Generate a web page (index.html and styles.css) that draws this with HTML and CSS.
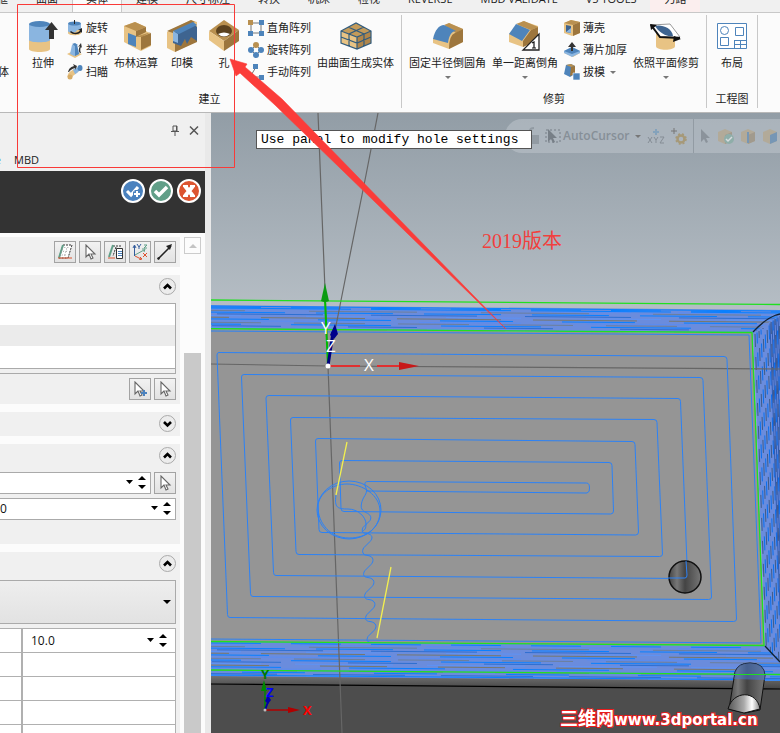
FILE: index.html
```html
<!DOCTYPE html>
<html lang="zh-CN">
<head>
<meta charset="utf-8">
<title>CAD</title>
<link rel="stylesheet" href="styles.css">
</head>
<body>
<svg class="defs" aria-hidden="true">
  <symbol id="arrow" viewBox="0 0 16 16"><path d="M4 1v12l3-3 2 5 2-1-2-4h4z" fill="#fff" stroke="#666" stroke-width="1.1"/></symbol>
  <symbol id="up" viewBox="0 0 17 17"><circle cx="8.500" cy="8.500" r="8" fill="#ececec" stroke="#aaa"/><path d="M5 10.500 8.500 7 12 10.500" fill="none" stroke="#000" stroke-width="2.600"/></symbol>
  <symbol id="down" viewBox="0 0 17 17"><circle cx="8.500" cy="8.500" r="8" fill="#ececec" stroke="#aaa"/><path d="M5 7 8.500 10.500 12 7" fill="none" stroke="#000" stroke-width="2.600"/></symbol>
  <symbol id="spin" viewBox="0 0 22 16"><path d="M0 5h7L3.500 9zM12 5l4-4 4 4zM12 10h8l-4 4z"/></symbol>
</svg>

<nav class="tabs">
  <button class="tab tab-cut">线框</button><button class="tab">曲面</button><button class="tab active">实体</button><button class="tab">建模</button><button class="tab">尺寸标注</button><button class="tab">转换</button><button class="tab">机床</button><button class="tab">检视</button><button class="tab">REVERSE</button><button class="tab">MBD VALIDATE</button><button class="tab">V5 TOOLS</button><button class="tab tool">刀路</button>
</nav>

<header class="ribbon">
  <section class="group group-cut"><div class="stack"><span></span><span></span><button class="small">实体</button></div></section>

  <section class="group">
    <div class="items">
      <button class="big"><svg viewBox="0 0 32 32"><path d="M2 20v9c0 4 21 4 21 0v-9z" fill="#e8c384"/><path d="M2 4v16c0 3 21 3 21 0V4z" fill="#8ab5e0"/><ellipse cx="12.500" cy="4" rx="10.500" ry="3" fill="#4e84bb"/><path d="M22 19v-9h-4l6.500-8L31 10h-4v9z" fill="#333"/></svg>拉伸</button>
      <div class="stack">
        <button class="small"><svg viewBox="0 0 16 16"><path d="M1 4v9c0 3 13 3 13 0V4z" fill="#e8c384"/><path d="M1 4v7c0 2 8 3 9-1h4V4z" fill="#8ab5e0"/><ellipse cx="7.500" cy="3.500" rx="6.500" ry="2" fill="#4e84bb"/><path d="M7.500 0v4" stroke="#222"/><path d="M4 11c3 3 8 2 9-1l-2 0 4-2v5l-1-1c-3 3-8 3-11 0z" fill="#222"/></svg>旋转</button>
        <button class="small"><svg viewBox="0 0 16 16"><path d="M0 12 6 9l9 3-7 4z" fill="#e8c384"/><path d="M3 12 5 3h5l2 9-5 2z" fill="#8ab5e0"/><path d="m8 3 2 0 2 9-4 2zM5 2l3-1 3 2-3 1z" fill="#4e84bb"/><path d="M13 11c-2-2-1-5 0-7l-2 1 3-4 1 5-1-1c-1 2-1 4 0 6z" fill="#333"/></svg>举升</button>
        <button class="small"><svg viewBox="0 0 16 16"><path d="M3 13C3 8 8 10 11 4" fill="none" stroke="#e8c384" stroke-width="5"/><path d="M7 8c2-1 3-2 4-4" fill="none" stroke="#8ab5e0" stroke-width="5"/><circle cx="3" cy="13" r="2.500" fill="#d8ad68"/><ellipse cx="13" cy="4" rx="2.500" ry="3" fill="#4e84bb"/><path d="M1 8C2 4 4 3 7 2L6 0l4 2-2 4V4C5 5 3 6 2 8z" fill="#333"/></svg>扫瞄</button>
      </div>
      <button class="big"><svg viewBox="0 0 32 32"><path d="m4 6 11-4 11 5v4l5 3v12l-10 5-8-4-9-5z" fill="#e8c384"/><path d="m4 6 11-4 11 5-10 4zM16 17l5-2 10-3-9 5z" fill="#b99050"/><path d="m16 11 10-4v5l-10 5zM21 17l10-4v12l-10 5z" fill="#9d763d"/><path d="m8 13 8 3v11l-8-3z" fill="#4e84bb"/></svg>布林运算</button>
      <button class="big"><svg viewBox="0 0 32 32"><path d="M1 12 25 0l6 2v19L9 32l-8-4z" fill="#e8c384"/><path d="M1 11 25 0l4 2L7 13zM9 23l22-9v8L9 32z" fill="#9d763d"/><path d="m7 13 20-10 4 4v14l-6-4-4 7-2-5-4 7-8-3z" fill="#3e6490"/><path d="m7 11 20-9 4 3-18 9z" fill="#4e84bb"/><path d="m7 11 5 3v9l-5-2z" fill="#8ab5e0"/></svg>印模</button>
      <button class="big"><svg viewBox="0 0 32 32"><path d="M1 11 16 0l15 10-15 11z" fill="#b99050"/><path d="m1 11 15 10v10L1 20z" fill="#e8c384"/><path d="m31 10-15 11v10l15-10z" fill="#9d763d"/><ellipse cx="16" cy="11" rx="8" ry="6" fill="#5c421f"/><path d="M10 14q6-3 12 0-6 5-12 0" fill="#fff"/></svg>孔</button>
      <div class="stack">
        <button class="small"><svg viewBox="0 0 16 16"><path d="M3 3h10v10H3z" fill="none" stroke="#777"/><path d="M0 0h5v5H0z" fill="#b99050"/><path d="M11 0h5v5h-5zM0 11h5v5H0zM11 11h5v5h-5z" fill="#4e84bb"/></svg>直角阵列</button>
        <button class="small"><svg viewBox="0 0 16 16"><path d="m8 3 5 5-5 5-5-5z" fill="none" stroke="#777"/><circle cx="8" cy="3" r="3" fill="#b99050"/><g fill="#4e84bb"><circle cx="3" cy="8" r="3"/><circle cx="13" cy="8" r="3"/><circle cx="8" cy="13" r="3"/></g></svg>旋转阵列</button>
        <button class="small"><svg viewBox="0 0 16 16"><path d="M8 3 2 13h11" fill="none" stroke="#777"/><path d="M5 0h5v5H5zM11 11h5v5h-5zM0 10h4v4H0z" fill="#4e84bb"/></svg>手动阵列</button>
      </div>
      <button class="big"><svg viewBox="0 0 32 32"><path d="M1 11 16 3l15 8-14 6z" fill="#c49b5a"/><path d="m1 11 16 6v12L1 23z" fill="#e8c384"/><path d="m31 11-14 6v12l14-6z" fill="#b1864a"/><path d="M1 11 16 3l15 8v12l-14 6-16-6zM1 11l16 6 14-6M17 17v12M8 7l16 7v12M24 7 9 14v12M1 17l16 6 14-6" fill="none" stroke="#335c7c" stroke-width="1.200"/></svg>由曲面生成实体</button>
    </div>
    <h2>建立</h2>
  </section>

  <section class="group">
    <div class="items">
      <button class="big menu"><svg viewBox="0 0 32 32"><path d="M1 19 17 3l14 6v13l-14 7-16-6z" fill="#e8c384"/><path d="m12 5 5-2 14 6-7 4z" fill="#b99050"/><path d="M1 19C3 10 7 5 12 5l12 6c-4 0-7 4-8 12z" fill="#4e84bb"/><path d="m31 9-8 4q-6 2-6 16l14-7z" fill="#9d763d"/></svg>固定半径倒圆角</button>
      <button class="big menu"><svg viewBox="0 0 32 32"><path d="m0 14 14-13 15 5v14l-15 7-14-5z" fill="#e8c384"/><path d="m7 4 8-3 14 6-7 3z" fill="#b99050"/><path d="m0 14 7-10 14 6-8 11z" fill="#4e84bb"/><path d="m29 7-7 3-8 11v6l15-7z" fill="#9d763d"/><path d="M14 30h16V14z" fill="#fff" stroke="#222" stroke-width="1.300"/><path d="m23 23 2-1v6m-2 0h4" fill="none" stroke="#111" stroke-width="1.200"/></svg>单一距离倒角</button>
      <div class="stack">
        <button class="small"><svg viewBox="0 0 16 16"><path d="m0 3 7-3 9 2v11l-8 3-8-3z" fill="#e8c384"/><path d="m0 3 7-3 9 2-7 3z" fill="#b99050"/><path d="m9 5 7-3v11l-7 3z" fill="#9d763d"/><path d="m2 5 5 1v7l-5-1z" fill="#3e6490"/><path d="m2 12 5-4v5z" fill="#8ab5e0"/></svg>薄壳</button>
        <button class="small"><svg viewBox="0 0 16 16"><path d="m0 11 8-3 8 3-7 4z" fill="#e8c384"/><path d="m0 9 8-4 8 4v2l-8 4-8-4z" fill="#8ab5e0"/><path d="m0 9 8-4 8 4-8 3z" fill="#4e84bb"/><path d="M7 9V5H4l4-5 4 5H9v4z" fill="#333"/></svg>薄片加厚</button>
        <button class="small"><svg viewBox="0 0 16 16"><path d="m2 1 5-1 4 2v8l-5 3-6-3z" fill="#4e84bb"/><path d="m2 1 5-1 4 2-4 1z" fill="#b99050"/><path d="m7 3 4-1v8l-5 2z" fill="#9d763d"/><path d="M9 9h7v7H9z" fill="#4e84bb" stroke="#fff" stroke-width=".6"/></svg>拔模<i class="caret"></i></button>
      </div>
      <button class="big menu"><svg viewBox="0 0 32 32"><path d="M6 13v13c0 5 19 5 19 0V14z" fill="#e8c384"/><path d="m1 5 19-1 10 13-20 0z" fill="#fff" stroke="#999"/><path d="M5 6c5-2 17 1 18 10-8 1-14-4-18-10" fill="#3e6490"/><path d="m1 5 9 12 20 1" fill="none" stroke="#111" stroke-width="2"/><path d="m0 4 7 1-6 5zM31 19l-7-3-1 6z" fill="#111"/></svg>依照平面修剪</button>
    </div>
    <h2>修剪</h2>
  </section>

  <section class="group">
    <div class="items">
      <button class="big"><svg viewBox="0 0 32 32"><path d="M1.500 3.500h29v25h-29zM19.500 7.500h8v8h-8zM4.500 17.500h8v8h-8zM18.500 20.500h12M18.500 20v8M24.500 20v8M18.500 24.500h12" fill="#fff" stroke="#4e84bb"/><circle cx="8.500" cy="10.500" r="4" fill="none" stroke="#4e84bb"/></svg>布局</button>
    </div>
    <h2>工程图</h2>
  </section>
</header>

<main class="work">
  <aside class="panel">
    <div class="panel-head">
      <button class="plain" aria-label="pin"><svg width="10" height="11" viewBox="0 0 10 11"><path d="M3 1h4v5H3zM1 6.500h8M5 7v4M6.500 1v5" fill="none" stroke="#555"/></svg></button>
      <button class="plain" aria-label="close"><svg width="10" height="11" viewBox="0 0 10 11"><path d="m1 1.500 8 8m0-8-8 8" stroke="#555" stroke-width="1.500"/></svg></button>
    </div>
    <div class="panel-tabs"><a href="#" class="link">e</a><a href="#">MBD</a></div>
    <div class="confirm">
      <button class="plain" aria-label="ok and new"><svg width="24" height="24" viewBox="0 0 24 24"><circle cx="12" cy="12" r="11" fill="#4b82be" stroke="#fff" stroke-width="2"/><path d="m6 12 4 4 7-8" fill="none" stroke="#fff" stroke-width="3"/><path d="M16 11v8m-4-4h8" stroke="#4b82be" stroke-width="5"/><path d="M16 12v6m-3-3h6" stroke="#fff" stroke-width="2"/></svg></button>
      <button class="plain" aria-label="ok"><svg width="24" height="24" viewBox="0 0 24 24"><circle cx="12" cy="12" r="11" fill="#619f88" stroke="#fff" stroke-width="2"/><path d="m6 12 4 4 8-8" fill="none" stroke="#fff" stroke-width="3.500"/></svg></button>
      <button class="plain" aria-label="cancel"><svg width="24" height="24" viewBox="0 0 24 24"><circle cx="12" cy="12" r="11" fill="#dc5430" stroke="#fff" stroke-width="2"/><path d="m8 7 8 10m0-10L8 17" stroke="#fff" stroke-width="4"/><path d="M6 7h5m2 0h5M6 17h5m2 0h5" stroke="#fff" stroke-width="2"/></svg></button>
    </div>
    <div class="panel-body">
      <div class="sections">
        <div class="box tools">
          <button class="tool-btn" aria-label="plane"><svg viewBox="0 0 16 16"><path d="M6 1h9l-4 13H2z" fill="#fff" stroke="#333" stroke-dasharray="2 1"/><path d="m6 1-4 13" stroke="#619f88" stroke-width="2"/><path d="M1 14h14" stroke="#dc5430"/><path d="M8 3 5 12m6-9-3 9M5 5h8M4 8h8M3 11h8" stroke="#999" stroke-dasharray="1 3"/></svg></button>
          <button class="tool-btn" aria-label="select"><svg viewBox="0 0 16 16"><use href="#arrow"/></svg></button>
          <button class="tool-btn" aria-label="plane list"><svg viewBox="0 0 16 16"><path d="M6 2h9M9 3 6 12" stroke="#333" stroke-dasharray="2 1"/><path d="M6 1 2 13" stroke="#619f88" stroke-width="2"/><path d="M1 14h7" stroke="#dc5430"/><path d="M9.500 4.500h6v10h-6z" fill="#fff" stroke="#333"/><path d="M11 7.500h4m-4 2h4m-4 2h4" stroke="#4b82be"/></svg></button>
          <button class="tool-btn" aria-label="axes"><svg viewBox="0 0 16 16"><path d="M2.500 12V2M1 4l1.500-3L4 4M5 0l2 3 2-3M7 3v2" fill="none" stroke="#335c9c"/><path d="m3 11 9-5M10 5l3 0-1 3M12 1h3l-3 3h3" fill="none" stroke="#619f88"/><path d="m3 12 6 3M8 13l2 2-3 1M11 9l4 4m0-4-4 4" fill="none" stroke="#dc5430"/></svg></button>
          <button class="tool-btn" aria-label="vector"><svg viewBox="0 0 16 16"><path d="M1 15 14 2" stroke="#222" stroke-width="1.500"/><path d="m15 0-2 6-4-4zM0 14l2-1 1 2-2 1z" fill="#222"/></svg></button>
        </div>
        <div class="box">
          <button class="expander" aria-label="collapse"><svg width="17" height="17"><use href="#up"/></svg></button>
          <ul class="list"><li></li><li></li><li></li></ul>
          <div class="tools-row"><button class="tool-btn" aria-label="add"><svg viewBox="0 0 16 16"><use href="#arrow" x="-1"/><path d="M12 9v6m-3-3h6" stroke="#4b82be" stroke-width="2"/></svg></button><button class="tool-btn" aria-label="select"><svg viewBox="0 0 16 16"><use href="#arrow"/></svg></button></div>
        </div>
        <div class="box"><button class="expander" aria-label="expand"><svg width="17" height="17"><use href="#down"/></svg></button></div>
        <div class="box roomy">
          <button class="expander" aria-label="collapse"><svg width="17" height="17"><use href="#up"/></svg></button>
          <div class="tools-row"><label class="field"><input aria-label="diameter" value=""><svg width="22" height="16"><use href="#spin"/></svg></label><button class="tool-btn" aria-label="select"><svg viewBox="0 0 16 16"><use href="#arrow"/></svg></button></div>
          <label class="field"><input aria-label="angle" value="0"><svg width="22" height="16"><use href="#spin"/></svg></label>
        </div>
        <div class="box last">
          <button class="expander" aria-label="collapse"><svg width="17" height="17"><use href="#up"/></svg></button>
          <button class="drop" aria-label="hole style"><i class="caret black"></i></button>
          <table class="grid">
            <tr><td></td><td><label class="cell"><input aria-label="value" value="10.0"><svg width="22" height="16"><use href="#spin"/></svg></label></td></tr>
            <tr><td></td><td></td></tr><tr><td></td><td></td></tr><tr><td></td><td></td></tr><tr><td></td><td></td></tr>
          </table>
        </div>
      </div>
      <div class="scroll"><button class="scroll-up" aria-label="scroll up"></button><div class="thumb"></div></div>
    </div>
  </aside>

  <section class="view">
    <svg class="scene" viewBox="211 113 569 620" preserveAspectRatio="xMinYMin slice">
      <defs>
        <linearGradient id="sky" x2="0" y2="1"><stop offset="0" stop-color="#929da6"/><stop offset="1" stop-color="#b6bec5"/></linearGradient>
        <linearGradient id="edge" x2="0" y2="1"><stop offset="0" stop-color="#777"/><stop offset="1" stop-color="#444"/></linearGradient>
        <linearGradient id="metal"><stop offset="0" stop-color="#444"/><stop offset=".25" stop-color="#777"/><stop offset=".5" stop-color="#444"/><stop offset="1" stop-color="#777"/></linearGradient>
        <linearGradient id="tip"><stop offset="0" stop-color="#555"/><stop offset=".5" stop-color="#aaa"/><stop offset=".75" stop-color="#fff"/><stop offset="1" stop-color="#888"/></linearGradient>
        <clipPath id="topBand"><path d="M211 305 780 310V315L753 333 211 329z"/></clipPath>
        <clipPath id="bottomBand"><path d="M211 641 765 646 780 662V681L211 676z"/></clipPath>
        <clipPath id="rightBand"><path d="M753 333 765 323 776 315 780 314V662L765 646z"/></clipPath>
      </defs>
      <path fill="url(#sky)" d="M211 113h569v200H211z"/>
      <path fill="#4d4d4d" d="M211 680h569v53H211z"/>
      <path fill="url(#edge)" d="M211 674 780 679V689L211 684z"/>
      <path d="M211 684 780 689" stroke="#000" stroke-width="1.200"/>
      <path fill="#959595" d="M211 329 753 333 765 646 211 642z"/>
      <path fill="#6a8cdd" d="M211 305 780 310V315L753 333 211 329zM753 333 776 315 780 314V662L765 646zM211 641 765 646 780 662V681L211 676z"/>
      <g id="topLines" clip-path="url(#topBand)"></g>
      <g id="bottomLines" clip-path="url(#bottomBand)"></g>
      <g id="rightLines" clip-path="url(#rightBand)"></g>
      <g fill="none" stroke="#666" stroke-width="1.200"><path d="M318 113 328 366 342 733M378 113 366 175 349 260 328 366M211 364 328 366 780 369"/></g>
      <g fill="none" stroke="#2c82f6" stroke-width="1">
        <path d="M211 331 749 335 761 643 211 639"/>
        <path d="M219 352.500 724 356.500q3 0 3 3L736.500 619q0 2.500-3 2.500L230 617.500q-2.500 0-2.500-3L217 355q0-2.500 2-2.500z"/>
        <path d="M244 374.500 700 377.500q3 0 3 3L711.500 597q0 2.500-3 2.500L253 596.500q-2.500 0-2.500-3L241.500 377q0-2.500 2.500-2.500z"/>
        <path d="M269 395.500 678 398.500q2.500 0 2.500 3L687.500 576q0 2.500-3 2.500L276 575.500q-2.500 0-2.500-3L266 398q0-2.500 3-2.500z"/>
        <path d="M293 417.500 654 419.500q3 0 3 3L662.500 554q0 2.500-3 2.500L299 554.500q-3 0-3-3L290.500 420q0-2.500 2.500-2.500z"/>
        <path d="M318 438.500 632 441.500q3 0 3 3L638.500 532q0 3-3 3L322 532.500q-3 0-3-3L315.500 441q0-2.500 2.500-2.500z"/>
        <path d="M342 460.500 609 462.500q3 0 3 3L613.500 511q0 3-3 3L344 511.500q-3 0-3-3L339.500 463q0-2.500 2.500-2.500z"/>
        <path d="M366 491 587 493q3-1 2.500-5 0-5-3-5L368 481.500q-4 0-3 4c4 8-1 9-3 16s0 9 4 11 6 4 4 8l-7 7c-2 4 0 6 4 6 6 1 6 5 3 8l-6 6c-3 4-1 8 4 8 6 1 6 6 3 9l-6 6c-3 4-1 7 3 7 7 1 7 6 4 9l-6 6c-3 4-1 7 3 7 7 1 7 6 4 9l-6 6c-3 4-1 7 3 7 7 1 7 6 4 9l-6 6c-2 4-1 6 4 6"/>
        <path d="M336 495c-2 13 2 14 12 14s18 8 18 15-3 6-4 8"/>
        <ellipse cx="349" cy="510" rx="32" ry="29"/><path d="M318 507c0-13 14-23 29-23s33 11 33 27-12 27-31 27-31-15-31-31"/>
      </g>
      <circle cx="685" cy="577" r="16" fill="url(#metal)" stroke="#111" stroke-width="1.500"/><path d="M668 578h17q2 0 2-3l-1-14" fill="none" stroke="#2c82f6"/>
      <g fill="none" stroke="#20e020" stroke-width="1.300"><path d="M211 300 780 304.500M211 328.700 752 332.500 764 645.500 211 641.500M211 670 780 674.500"/></g>
      <path d="M753 332q12-13 23-17l4-1M765 646l15 16" fill="none" stroke="#123" stroke-width="1.300"/>
      <path d="M735 672q3-9 15-9 14 0 15 12l-5 35-15 3-16-4z" fill="url(#metal)" stroke="#111"/><path d="M735 672q3-9 15-9 14 0 15 12v5l-31-1z" fill="#4777cc" opacity=".55"/><path d="m728 709c5-19 29-19 32 0l-16 4z" fill="url(#tip)" stroke="#111"/><path d="M730 674.500h40" stroke="#20dc20"/>
      <path d="m347 442-11 53M391 567l-14 71" stroke="#f2ef50" stroke-width="1.300"/>
      <path d="m328 366-3-66" stroke="#0b0" stroke-width="2"/><path d="m325 283-4 18q4 2 8 0z" fill="#0a9b12"/>
      <path d="m328 366 5-34" stroke="#00007f" stroke-width="3"/><path d="m335 324-5 11 4 4 4-5z" fill="#00008b"/>
      <path d="M328 366h32m17 0h25" stroke="#e03030" stroke-width="2"/><path d="m399 362 20 4-20 4z" fill="#c81818"/>
      <circle cx="328" cy="366" r="2.500" fill="#fff"/>
      <g class="axis"><text x="321" y="334">Y</text><text x="326" y="352">Z</text><text x="364" y="371">X</text></g>
      <path d="M265 710v-24" stroke="#080" stroke-width="1.500"/><path d="m264 680-3 11h6z" fill="#080"/><path d="m265 710 3-8" stroke="#00a" stroke-width="2"/><path d="m268 695-3 6 3 3 3-4z" fill="#00a"/><path d="M266 710h24" stroke="#b00000" stroke-width="1.500"/><path d="m288 707 12 3-12 3z" fill="#b00000"/><circle cx="265" cy="710" r="1.500" fill="#bbb"/>
      <g class="mini"><text x="261" y="679" fill="#070">Y</text><text x="266" y="697" fill="#00f">Z</text><text x="303" y="715" fill="#f00">X</text></g>
      <text class="mark" x="560" y="725"><tspan class="mark-cn">三维网</tspan>www.3dportal.cn</text>
    </svg>

    <div class="cursor-bar">
      <svg width="12" height="18" viewBox="0 0 12 18"><path d="M3 8V4q0-3 4-3" fill="none" stroke="#929ba3" stroke-width="2"/><path d="M0 8h12v9H0z" fill="#929ba3"/></svg>
      <button class="plain"><svg width="16" height="16" viewBox="0 0 16 16"><path d="M1 2h14v12H1z" fill="none" stroke="#777f87" stroke-dasharray="2 2"/><path d="M3 1v13l3-3 2 4 2-1-2-4h4z" fill="#777f87"/></svg>AutoCursor<i class="caret"></i></button>
      <svg width="18" height="18" viewBox="0 0 18 18"><path d="M9 2v6M6 5h6" stroke="#84a2bb" stroke-width="2"/><path d="m1 10 4 6m0-6-4 6M7 10l2 3 2-3M9 13v3M13 10h4l-4 6h4" fill="none" stroke="#858d95"/></svg>
      <svg width="16" height="18" viewBox="0 0 16 18"><path d="M3 1v6M0 4h6" stroke="#777"/><circle cx="10" cy="12" r="3.500" fill="none" stroke="#a69978" stroke-width="2.500"/><circle cx="10" cy="12" r="5" fill="none" stroke="#a69978" stroke-width="1.500" stroke-dasharray="2 2"/></svg>
      <span class="rule"></span>
      <svg width="12" height="18" viewBox="0 0 12 18"><path d="M1 2v13l3-3 2 4 2-1-2-4h4z" fill="#8b939b"/></svg>
      <svg width="16" height="16" viewBox="0 0 16 16"><path d="m0 4 7-3 7 3v9l-7 3-7-3z" fill="#b2aa99"/><path d="m7 7 7-3v9l-7 3z" fill="#a19a8d"/><circle cx="11" cy="11" r="5" fill="#8faea9"/><path d="m8 11 2 2 4-4" fill="none" stroke="#d6dcdf" stroke-width="1.500"/></svg>
      <svg width="16" height="16" viewBox="0 0 16 16"><path d="m1 4 7-3 7 3v9l-7 3-7-3z" fill="#b2aa99"/><path d="m8 7 7-3v9l-7 3z" fill="#a19a8d"/><path d="M8 4v11" stroke="#7696b5" stroke-width="2"/></svg>
      <svg width="16" height="16" viewBox="0 0 16 16"><path d="m1 4 7-3 7 3v9l-7 3-7-3z" fill="#b2aa99"/><path d="m8 7 7-3v9l-7 3z" fill="#7696b5"/></svg>
    </div>
    <div class="tip">Use panel to modify hole settings</div>
    <p class="note">2019版本</p>
  </section>
</main>

<svg class="callout" width="780" height="733" viewBox="0 0 780 733" aria-hidden="true">
  <path d="M17.500 4.500h217v163h-217z" fill="none" stroke="#f93a38"/>
  <path d="M230 59 247 64 245 67 282 99 506 329 275 105 240 73 236 76z" fill="#fb3c39" stroke="#fb3c39" stroke-width=".6"/>
</svg>
<script src="scene.js"></script>
</body>
</html>
```
FILE: styles.css
```css
* { box-sizing: border-box; }
html, body { height: 100%; }
body {
  margin: 0; display: flex; flex-direction: column; overflow: hidden; position: relative;
  font: 11px/14px "Open Sans", "Noto Sans CJK SC", sans-serif; color: #222; background: #f0f0f0;
}
button { font: inherit; color: inherit; border: 0; padding: 0; margin: 0; background: none; }
svg { display: block; flex: none; }
.defs { position: absolute; width: 0; height: 0; }
.plain { display: flex; align-items: center; }

.tabs { display: flex; align-items: flex-end; flex: none; height: 13px; overflow: hidden; border-bottom: 1px solid #c8c8c8; }
.tab { flex: none; padding: 0 14px 6px; white-space: nowrap; }
.tab-cut { width: 22px; display: flex; justify-content: flex-end; padding-left: 0; }
.tab.active { background: #fbfbfb; border: 1px solid #c8c8c8; border-width: 0 1px; padding: 0 13px 6px; }
.tab.tool { background: #fbeeee; }

.ribbon { display: flex; flex: none; padding: 2px 0 4px; background: #fbfbfb; border-bottom: 1px solid #b8b8b8; }
.group { display: flex; flex-direction: column; padding: 2px 7px; border-right: 1px solid #c8c8c8; }
.group-cut { width: 18px; padding-right: 8px; align-items: flex-end; overflow: hidden; flex: none; }
.items { display: flex; gap: 6px; }
.group h2 { margin: auto 0 0; padding-top: 9px; font: inherit; text-align: center; }
.stack { display: grid; grid-template-rows: repeat(3, 22px); }
.small { display: flex; align-items: center; gap: 3px; white-space: nowrap; }
.small svg { width: 16px; height: 16px; }
.big { display: flex; flex-direction: column; align-items: center; min-width: 36px; padding-top: 3px; line-height: 22px; white-space: nowrap; }
.big svg { width: 32px; height: 32px; }
.caret, .menu::after { content: ""; border: 3px solid transparent; border-top-color: #777; border-bottom: 0; }
.menu::after { margin-top: 2px; }
.small .caret { margin-left: 2px; }
.caret.black { border-width: 4px 4px 0; border-top-color: #000; }

.work { display: flex; flex: 1; min-height: 0; }
.panel { display: flex; flex-direction: column; width: 211px; flex: none; border-right: 6px solid #e9e9e9; overflow: hidden; }
.panel-head { display: flex; justify-content: flex-end; gap: 9px; padding: 12px 6px 13px; }
.panel-tabs { display: flex; gap: 13px; padding: 4px 0; font-size: 11px; }
.panel-tabs a { color: #222; text-decoration: none; }
.panel-tabs .link { color: #2a83b5; width: 1px; direction: rtl; }
.confirm { display: flex; justify-content: flex-end; gap: 4px; height: 62px; padding: 8px 4px; background: #333; flex: none; align-items: flex-start; }
.panel-body { display: flex; flex: 1; min-height: 0; gap: 4px; padding: 4px 4px 0 0; background: #fcfcfc; }
.sections { flex: 1; display: flex; flex-direction: column; gap: 8px; min-width: 0; }
.box { display: flex; flex-direction: column; gap: 4px; padding: 3px 4px 4px 0; background: #f0f0f0; flex: none; }
.tools, .tools-row { display: flex; flex-direction: row; justify-content: flex-end; gap: 3px; }
.tools { padding: 4px 4px 4px 0; }
.roomy { padding-bottom: 24px; }
.last { flex: 1; padding-bottom: 0; overflow: hidden; }
.tool-btn { width: 22px; height: 22px; flex: none; display: grid; place-items: center; border: 1px solid #a3a3a3; background: linear-gradient(#f2f2f2, #e2e2e2); }
.tool-btn svg { width: 16px; height: 16px; }
.expander { align-self: flex-end; }
.expander:not(:last-child) { margin-bottom: 4px; }
.list { list-style: none; margin: 0; padding: 0 0 4px; border: 1px solid #aaa; border-left: 0; }
.list li { height: 21px; background: #fff; }
.list li:nth-child(2) { background: #ebebeb; }
.list li:last-child { height: 23px; border-bottom: 1px solid #aaa; }
.field, .cell { display: flex; align-items: center; flex: 1; min-width: 0; padding-right: 2px; }
.field { flex: 1 0 auto; height: 22px; background: #fff; border: 1px solid #aaa; border-left: 0; }
.tools-row .field { width: 0; flex: 1; }
input { flex: 1; min-width: 0; width: 0; border: 0; padding: 0; background: none; font: 12px/16px "Open Sans", sans-serif; color: #111; }
.drop { height: 44px; flex: none; display: flex; align-items: center; justify-content: flex-end; padding-right: 4px; border: 1px solid #aaa; border-left: 0; background: linear-gradient(#eee, #e2e2e2); }
.grid { border-collapse: collapse; width: 100%; table-layout: fixed; background: #fff; }
.grid td { height: 24px; padding: 0 4px 0 8px; border: 1px solid #b0b0b0; }
.grid td:first-child { width: 22px; border-left: 0; border-right-width: 2px; }
.scroll { width: 17px; display: flex; flex-direction: column; }
.scroll-up { height: 17px; flex: none; border: 1px solid #ccc; display: grid; place-items: center; }
.scroll-up::before { content: ""; border: 4px solid transparent; border-bottom-color: #c4c4c4; border-top: 0; }
.thumb { margin-top: 99px; flex: 1; background: #c9c9c9; }

.view { flex: 1; position: relative; overflow: hidden; min-width: 0; }
.scene { width: 100%; height: 100%; }
.axis { font: 17px "Open Sans", sans-serif; fill: #fff; }
.mini { font: bold 13px "Open Sans", sans-serif; }
.mark { font: bold 15px "DejaVu Sans", sans-serif; fill: #fff; stroke: #e81c1c; stroke-width: 2px; paint-order: stroke; }
.mark-cn { font: bold 18px "Noto Sans CJK SC", sans-serif; }
.cursor-bar { position: absolute; top: 6px; right: 0; width: 275px; height: 34px; display: flex; align-items: center; gap: 6px; padding-left: 22px; overflow: hidden; border-radius: 17px 0 0 17px; background: rgba(190, 197, 204, .55); }
.cursor-bar .plain { gap: 2px; font-size: 12px; font-weight: 600; color: #868f97; }
.cursor-bar .caret { margin-left: 4px; }
.rule { width: 1px; height: 34px; flex: none; background: #929ba3; }
.tip { position: absolute; left: 45px; top: 17px; width: 276px; padding: 0 4px; border: 1px solid #555; background: #fff; color: #000; font: 13px/17px "Liberation Mono", monospace; white-space: nowrap; }
.note { position: absolute; left: 271px; top: 116px; margin: 0; font: 20px/24px "Liberation Serif", "Noto Sans CJK SC", serif; color: #f2403d; }
.callout { position: absolute; left: 0; top: 0; pointer-events: none; }
```
FILE: scene.js
```js
// Draws the dense tool-path passes on the rounded edges of the block.
const NS = "http://www.w3.org/2000/svg";
const shades = ["#0a80ff", "#5b8cf0", "#6c7f9c", "#0a80ff", "#2f6fd0", "#5e93f5", "#77786e"];

function pass(group, d, color, dash, offset) {
  const p = document.createElementNS(NS, "path");
  p.setAttribute("d", d);
  p.setAttribute("stroke", color);
  p.setAttribute("fill", "none");
  if (dash) {
    p.setAttribute("stroke-dasharray", dash);
    p.setAttribute("stroke-dashoffset", offset);
  }
  group.appendChild(p);
}

function band(id, top, count, step) {
  const group = document.getElementById(id);
  for (let i = 0; i < count; i++) {
    const y = top + i * step;
    pass(group, `M211 ${y}L780 ${y + 5}`, shades[i % 7], `${50 + (i * 29) % 60} ${30 + (i * 17) % 50}`, i * 37);
  }
}

band("topLines", 307, 14, 1.7);
band("bottomLines", 643, 20, 1.7);
pass(document.getElementById("topLines"), "M211 306L780 311", "#0a80ff");
pass(document.getElementById("topLines"), "M211 308L780 313", "#0a80ff", "140 20", 0);
pass(document.getElementById("bottomLines"), "M211 675L780 680", "#0a80ff");

const right = document.getElementById("rightLines");
for (let i = 0; i < 16; i++) {
  const x = 755 + i * 2;
  pass(right, `M${x} ${334 - i * 1.5}L${x + 12} 665`, i % 2 ? "#0a70ee" : "#3f5c88", i % 2 ? "14 9" : "13 10", i * 3);
  if (i > 6) pass(right, `M${x + 1} ${334 - i * 1.5}L${x + 13} 665`, "#2f5ab0");
}
```
